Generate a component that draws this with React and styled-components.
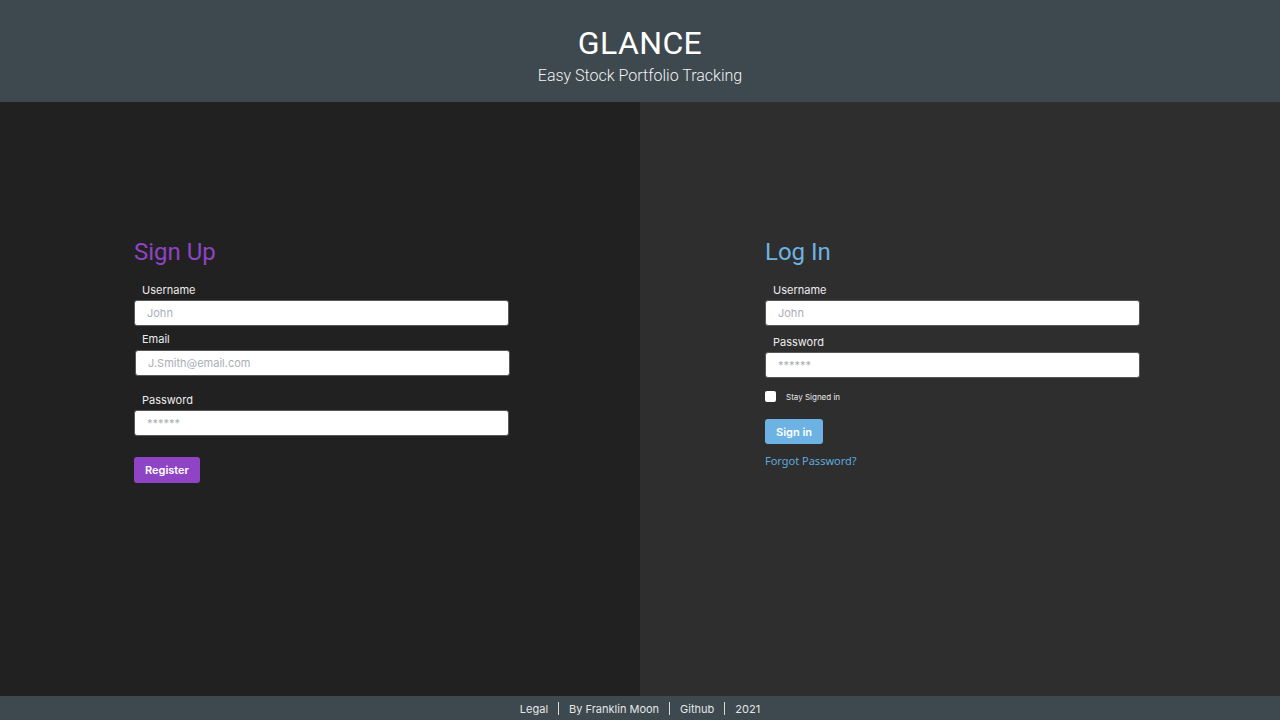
import React from "react";
import styled, { createGlobalStyle } from "styled-components";

const Global = createGlobalStyle`
  html, body { margin: 0; padding: 0; height: 100%; background: #212121; }
  #root { height: 100%; }
  * { box-sizing: border-box; }
`;

const Page = styled.div`
  display: flex;
  flex-direction: column;
  height: 720px;
  width: 1280px;
`;

const Header = styled.header`
  height: 102px;
  flex: none;
  background: #3d484f;
  display: flex;
  flex-direction: column;
  align-items: center;
  padding-top: 24px;
  color: #fff;
`;

const Title = styled.h1`
  margin: 0;
  font-family: Roboto, "Liberation Sans", sans-serif;
  font-weight: 400;
  font-size: 32px;
  line-height: 38px;
  letter-spacing: 0.4px;
`;

const Subtitle = styled.div`
  font-family: Roboto, "Liberation Sans", sans-serif;
  font-weight: 300;
  font-size: 16px;
  line-height: 20px;
  margin-top: 4px;
  color: #f2f2f2;
`;

const Main = styled.main`
  flex: 1;
  display: flex;
`;

const Panel = styled.section`
  width: 640px;
  background: ${(p) => p.$bg};
  padding-top: 136px;
  padding-left: ${(p) => p.$left}px;
`;

const Form = styled.form`
  width: 376px;
  display: flex;
  flex-direction: column;
  align-items: flex-start;
`;

const Heading = styled.h2`
  margin: 0;
  font-family: Roboto, "Liberation Sans", sans-serif;
  font-weight: 400;
  font-size: 24px;
  line-height: 28px;
  color: ${(p) => p.$color};
`;

const Label = styled.label`
  display: block;
  font-family: Inter, "Noto Sans", sans-serif;
  font-size: 11px;
  line-height: 14px;
  color: #ececec;
  padding-left: 8px;
  margin-top: ${(p) => p.$mt}px;
  margin-bottom: ${(p) => p.$mb ?? 3}px;
`;

const Input = styled.input`
  display: block;
  width: 375px;
  height: 26px;
  margin-left: ${(p) => p.$shift || 0}px;
  border: 1px solid #55595e;
  border-radius: 3px;
  background: #fff;
  padding: 0 12px;
  font-family: Inter, "Noto Sans", sans-serif;
  font-size: 11px;
  color: #333;
  outline: none;
  &::placeholder {
    color: #a9aeb7;
  }
`;

const Button = styled.button`
  height: ${(p) => p.$h}px;
  padding: 0 ${(p) => p.$px}px;
  margin-top: ${(p) => p.$mt}px;
  border: none;
  border-radius: 3px;
  background: ${(p) => p.$bg};
  color: #fff;
  font-family: Inter, "Noto Sans", sans-serif;
  font-weight: 600;
  font-size: 11px;
  cursor: pointer;
`;

const CheckRow = styled.label`
  display: flex;
  align-items: center;
  gap: 10px;
  margin-top: 13px;
  font-family: Inter, "Noto Sans", sans-serif;
  font-size: 8px;
  color: #e8e8e8;
`;

const Box = styled.span`
  width: 11px;
  height: 11px;
  background: #fff;
  border-radius: 2px;
  display: inline-block;
`;

const Link = styled.a`
  margin-top: 10px;
  font-family: "Noto Sans", Inter, sans-serif;
  font-size: 11px;
  line-height: 14px;
  color: #5fa9dd;
  text-decoration: none;
`;

const Footer = styled.footer`
  height: 24px;
  flex: none;
  background: #3d484f;
  display: flex;
  align-items: center;
  justify-content: center;
  gap: 10px;
  padding-top: 1px;
  font-family: Inter, "Noto Sans", sans-serif;
  font-size: 11px;
  color: #e6e6e6;
`;

const Sep = styled.span`
  display: inline-block;
  width: 1px;
  height: 13px;
  background: #d8d8d8;
`;

const PURPLE = "#8e44c4";
const BLUE = "#6cb3e3";

export default function App() {
  return (
    <>
      <Global />
      <Page>
        <Header>
          <Title>GLANCE</Title>
          <Subtitle>Easy Stock Portfolio Tracking</Subtitle>
        </Header>
        <Main>
          <Panel $bg="#212121" $left={134}>
            <Form onSubmit={(e) => e.preventDefault()}>
              <Heading $color={PURPLE}>Sign Up</Heading>
              <Label $mt={17}>Username</Label>
              <Input placeholder="John" />
              <Label $mt={6} $mb={4}>Email</Label>
              <Input placeholder="J.Smith@email.com" $shift={1} />
              <Label $mt={17}>Password</Label>
              <Input placeholder="******" type="text" />
              <Button $bg={PURPLE} $h={26} $px={11} $mt={21}>Register</Button>
            </Form>
          </Panel>
          <Panel $bg="#2e2e2e" $left={125}>
            <Form onSubmit={(e) => e.preventDefault()}>
              <Heading $color={BLUE}>Log In</Heading>
              <Label $mt={17}>Username</Label>
              <Input placeholder="John" />
              <Label $mt={9}>Password</Label>
              <Input placeholder="******" type="text" />
              <CheckRow>
                <Box />
                Stay Signed in
              </CheckRow>
              <Button $bg={BLUE} $h={25} $px={11} $mt={17}>Sign in</Button>
              <Link href="#">Forgot Password?</Link>
            </Form>
          </Panel>
        </Main>
        <Footer>
          <span>Legal</span>
          <Sep />
          <span>By Franklin Moon</span>
          <Sep />
          <span>Github</span>
          <Sep />
          <span>2021</span>
        </Footer>
      </Page>
    </>
  );
}
